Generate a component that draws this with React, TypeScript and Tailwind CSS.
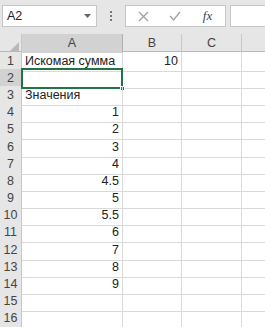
import React from 'react';

const rows: { a?: string; b?: string; aRight?: boolean }[] = [
  { a: 'Искомая сумма', b: '10' },
  {},
  { a: 'Значения' },
  { a: '1', aRight: true },
  { a: '2', aRight: true },
  { a: '3', aRight: true },
  { a: '4', aRight: true },
  { a: '4.5', aRight: true },
  { a: '5', aRight: true },
  { a: '5.5', aRight: true },
  { a: '6', aRight: true },
  { a: '7', aRight: true },
  { a: '8', aRight: true },
  { a: '9', aRight: true },
  {},
  {},
];

const cols = 'grid grid-cols-[22px_101px_59px_60px_1fr]';

export default function App() {
  return (
    <div className="w-[265px] h-[327px] overflow-hidden bg-white text-[#222] text-[12.5px]" style={{ fontFamily: '"Liberation Sans", Arial, sans-serif' }}>
      {/* formula bar */}
      <div className="h-[34px] bg-[#e6e6e6] flex items-start pt-[5px] pl-[2px]">
        <div className="w-[95px] h-[22px] bg-white border border-[#c6c6c6] flex items-center pl-[4px] pr-[5px]">
          <span className="flex-1 text-[12.5px]">A2</span>
          <svg width="7" height="4" viewBox="0 0 7 4"><path d="M0 0h7L3.5 4z" fill="#666" /></svg>
        </div>
        <div className="w-[28px] h-[22px] flex flex-col items-center justify-center gap-[2px]">
          <span className="w-[2px] h-[2px] bg-[#777]" />
          <span className="w-[2px] h-[2px] bg-[#777]" />
          <span className="w-[2px] h-[2px] bg-[#777]" />
        </div>
        <div className="w-[101px] h-[22px] bg-white border border-[#c6c6c6] flex items-center">
          <div className="w-[34px] flex justify-center">
            <svg width="11" height="11" viewBox="0 0 11 11"><path d="M1 1l9 9M10 1l-9 9" stroke="#a0a0a0" strokeWidth="1.3" /></svg>
          </div>
          <div className="w-[30px] flex justify-center">
            <svg width="12" height="10" viewBox="0 0 12 10"><path d="M1 5l3.5 4L11 1" stroke="#a0a0a0" strokeWidth="1.3" fill="none" /></svg>
          </div>
          <div className="flex-1 flex justify-center">
            <span className="italic text-[13px] text-[#444]" style={{ fontFamily: '"Liberation Serif", serif' }}>fx</span>
          </div>
        </div>
        <div className="ml-[4px] flex-1 h-[22px] bg-white border border-[#c6c6c6] border-r-0" />
      </div>

      {/* column headers */}
      <div className={`${cols} h-[18px] bg-[#e6e6e6] border-b border-[#b8b8b8]`}>
        <div className="relative border-r border-[#c8c8c8]">
          <svg className="absolute right-[2px] bottom-[2px]" width="9" height="9" viewBox="0 0 9 9"><path d="M9 0v9H0z" fill="#b9b9b9" /></svg>
        </div>
        <div className="bg-[#d2d2d2] border-r border-[#b0b0b0] flex items-center justify-center text-[#444]">A</div>
        <div className="border-r border-[#c8c8c8] flex items-center justify-center text-[#444]">B</div>
        <div className="border-r border-[#c8c8c8] flex items-center justify-center text-[#444]">C</div>
        <div />
      </div>

      {rows.map((r, i) => (
        <div key={i} className={`${cols} ${i === 4 || i === 10 ? 'h-[18px]' : 'h-[17px]'}`}>
          <div className={`border-r border-b border-[#c8c8c8] flex items-center justify-center text-[#444] ${i === 1 ? 'bg-[#d2d2d2]' : 'bg-[#e6e6e6]'}`}>
            {i + 1}
          </div>
          <div className={`relative border-r border-b border-[#d9d9d9] flex items-center px-[3px] whitespace-nowrap ${r.aRight ? 'justify-end' : ''}`}>
            {r.a}
            {i === 1 && (
              <>
                <div className="absolute left-[-1px] top-[-1px] right-[-1px] bottom-[-1px] border-2 border-[#217346]" />
                <div className="absolute right-[-3px] bottom-[-3px] w-[5px] h-[5px] bg-[#217346] border border-white" />
              </>
            )}
          </div>
          <div className="border-r border-b border-[#d9d9d9] flex items-center justify-end px-[3px]">{r.b}</div>
          <div className="border-r border-b border-[#d9d9d9]" />
          <div className="border-b border-[#d9d9d9]" />
        </div>
      ))}
    </div>
  );
}
